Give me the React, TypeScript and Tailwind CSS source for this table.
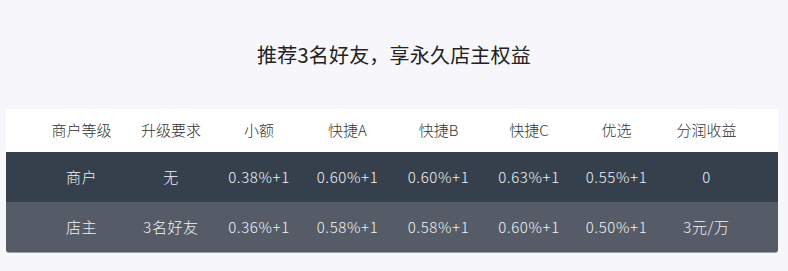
import React from 'react';

const headers = ['商户等级', '升级要求', '小额', '快捷A', '快捷B', '快捷C', '优选', '分润收益'];

const rows = [
  { bg: 'bg-[#36404c]', cells: ['商户', '无', '0.38%+1', '0.60%+1', '0.60%+1', '0.63%+1', '0.55%+1', '0'] },
  { bg: 'bg-[#555b67]', cells: ['店主', '3名好友', '0.36%+1', '0.58%+1', '0.58%+1', '0.60%+1', '0.50%+1', '3元/万'] },
];

const cols = 'grid grid-cols-[91px_88px_88px_89px_93px_88px_87px_93px] pl-[30px] pr-[25px]';

const App = () => {
  return (
    <div
      className="w-[788px] h-[271px] bg-[#f7f7fb] pt-[42px] font-light"
      style={{ fontFamily: '"Noto Sans CJK SC", "Noto Sans", sans-serif' }}
    >
      {/* Title */}
      <h2 className="text-center text-[20px] leading-[26px] text-[#222] tracking-[0.2px] font-normal">
        推荐3名好友，享永久店主权益
      </h2>

      {/* Rate table */}
      <div className="mx-[6px] mt-[41px] w-[772px] bg-white rounded-[3px] overflow-hidden border-b border-[#9aa0a8]">
        <div className={`${cols} h-[43px] items-center text-[15px] text-[#333]`}>
          {headers.map((h) => (
            <div key={h} className="text-center">{h}</div>
          ))}
        </div>
        {rows.map((row, i) => (
          <div key={i} className={`${cols} ${row.bg} h-[50px] items-center text-[15px] text-[#f2f3f5] tracking-[0.6px]`}>
            {row.cells.map((c, j) => (
              <div key={j} className="text-center">{c}</div>
            ))}
          </div>
        ))}
      </div>
    </div>
  );
};

export default App;
